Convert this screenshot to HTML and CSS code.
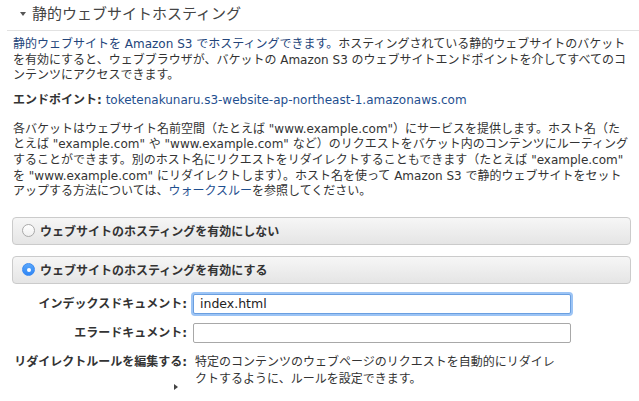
FILE: index.html
```html
<!DOCTYPE html>
<html lang="ja">
<head>
<meta charset="utf-8">
<title>静的ウェブサイトホスティング</title>
<link rel="stylesheet" href="styles.css">
</head>
<body>
<section class="panel">
  <header class="panel-head">
    <span class="caret-down"></span>
    <h2 class="panel-title">静的ウェブサイトホスティング</h2>
  </header>

  <div class="panel-body">
    <p class="desc"><span class="lead">静的ウェブサイトを Amazon S3 でホスティングできます。</span>ホスティングされている静的ウェブサイトのバケット<br>を有効にすると、ウェブブラウザが、バケットの Amazon S3 のウェブサイトエンドポイントを介してすべてのコ<br>ンテンツにアクセスできます。</p>

    <p class="endpoint"><b>エンドポイント:</b> <a class="link" href="#">toketenakunaru.s3-website-ap-northeast-1.amazonaws.com</a></p>

    <p class="desc">各バケットはウェブサイト名前空間（たとえば "www.example.com"）にサービスを提供します。ホスト名（た<br>とえば "example.com" や "www.example.com" など）のリクエストをバケット内のコンテンツにルーティング<br>することができます。別のホスト名にリクエストをリダイレクトすることもできます（たとえば "example.com"<br>を "www.example.com" にリダイレクトします）。ホスト名を使って Amazon S3 で静的ウェブサイトをセット<br>アップする方法については、<a class="link" href="#">ウォークスルー</a>を参照してください。</p>

    <label class="option">
      <input type="radio" name="hosting" class="radio">
      <span class="radio-ui"></span>
      <span class="option-text">ウェブサイトのホスティングを有効にしない</span>
    </label>

    <label class="option">
      <input type="radio" name="hosting" class="radio" checked>
      <span class="radio-ui"></span>
      <span class="option-text">ウェブサイトのホスティングを有効にする</span>
    </label>

    <div class="form">
      <div class="form-label">インデックスドキュメント:</div>
      <div class="form-field"><input type="text" class="text-input is-focused" value="index.html"></div>

      <div class="form-label">エラードキュメント:</div>
      <div class="form-field"><input type="text" class="text-input" value=""></div>

      <div class="form-label form-label--top">
        リダイレクトルールを編集する:
        <span class="caret-right"></span>
      </div>
      <div class="form-field form-field--top"><p class="form-note">特定のコンテンツのウェブページのリクエストを自動的にリダイレクトするように、ルールを設定できます。</p></div>
    </div>
  </div>
</section>
</body>
</html>
```

FILE: styles.css
```css
* {
  box-sizing: border-box;
}

html, body {
  margin: 0;
  padding: 0;
  background: #fff;
}

body {
  font-family: "DejaVu Sans", "Noto Sans CJK JP", sans-serif;
  font-size: 12px;
  color: #333;
}

/* collapsible section header */
.panel-head {
  display: flex;
  align-items: center;
  height: 31px;
  margin-left: 7px;
  padding-left: 13px;
  border-bottom: 1px solid #e2e2e2;
}

.caret-down {
  width: 0;
  height: 0;
  border-left: 3px solid transparent;
  border-right: 3px solid transparent;
  border-top: 4px solid #555;
  margin-right: 6px;
  margin-top: -2px;
}

.panel-title {
  margin: -5px 0 0;
  font-family: "Noto Sans CJK JP", sans-serif;
  font-size: 15px;
  font-weight: normal;
  color: #444;
  line-height: 18px;
}

.panel-body {
  padding: 6px 0 0 13px;
}

.desc {
  margin: 0;
  line-height: 15.6px;
  white-space: nowrap;
}

.lead {
  color: #23447a;
}

.endpoint {
  margin: 8px 0 14px;
  line-height: 16px;
}

.endpoint b {
  font-weight: bold;
  color: #333;
}

.link {
  color: #1f4f8f;
  text-decoration: none;
}

/* radio option bars */
.option {
  display: flex;
  align-items: center;
  height: 28px;
  margin-left: -1px;
  margin-right: 8px;
  padding-left: 9px;
  border: 1px solid #cbcbcb;
  border-radius: 4px;
  background: linear-gradient(#f6f6f6, #e5e5e5);
  cursor: pointer;
}

.option + .option {
  margin-top: 11px;
}

.desc + .option {
  margin-top: 17px;
}

.radio {
  position: absolute;
  opacity: 0;
  pointer-events: none;
}

.radio-ui {
  width: 13px;
  height: 13px;
  border-radius: 50%;
  border: 1px solid #a9a9a9;
  background: linear-gradient(#fff, #f0f0f0);
  margin-right: 5px;
  display: flex;
  align-items: center;
  justify-content: center;
  flex: none;
}

.radio:checked + .radio-ui {
  border-color: #3a8af2;
  background: linear-gradient(#5aa7fb, #2f86f5);
}

.radio:checked + .radio-ui::after {
  content: "";
  width: 4px;
  height: 4px;
  border-radius: 50%;
  background: #fff;
}

.option-text {
  font-weight: bold;
  color: #333;
}

/* document settings form */
.form {
  display: grid;
  grid-template-columns: 175px 378px;
  column-gap: 6px;
  row-gap: 9px;
  margin-top: 10px;
  margin-left: -1px;
  align-items: center;
}

.form-label {
  text-align: right;
  font-weight: bold;
  color: #333;
  line-height: 16px;
}

.form-label--top {
  align-self: start;
  margin-top: 2px;
}

.form-field--top {
  align-self: start;
}

.text-input {
  display: block;
  width: 378px;
  height: 20px;
  margin: 0;
  padding: 0 6px;
  font: 12.5px "DejaVu Sans", "Noto Sans CJK JP", sans-serif;
  color: #222;
  border: 1px solid #a8a8a8;
  border-radius: 2px;
  background: #fff;
  outline: none;
}

.text-input.is-focused {
  border: 1px solid #6a9fe0;
  box-shadow: 0 0 0 2px #9cc4f5;
}

.form-note {
  margin: 2px 0 0 2px;
  width: 366px;
  line-height: 17px;
}

.caret-right {
  display: block;
  width: 0;
  height: 0;
  margin: 14px 9px 0 auto;
  border-top: 3.5px solid transparent;
  border-bottom: 3.5px solid transparent;
  border-left: 4px solid #444;
}
```
